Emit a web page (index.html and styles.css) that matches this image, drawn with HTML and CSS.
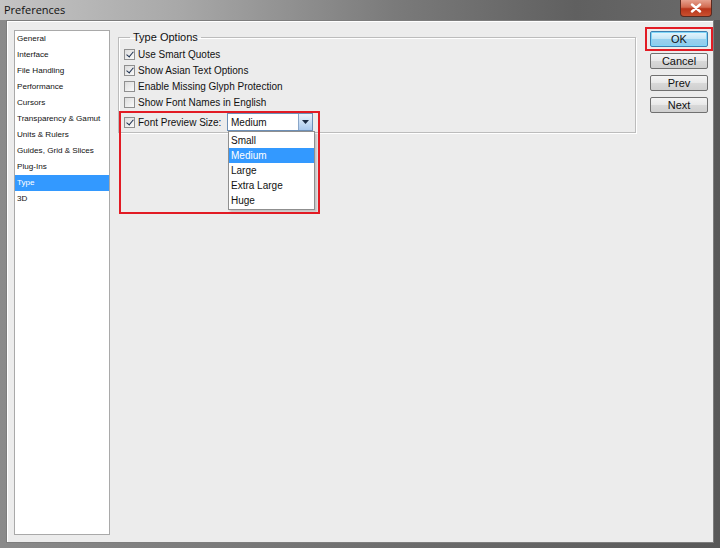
FILE: index.html
```html
<!DOCTYPE html>
<html>
<head>
<meta charset="utf-8">
<link rel="stylesheet" href="styles.css">
</head>
<body>
<div class="window">
  <div class="titlebar">
    <span class="title">Preferences</span>
    <div class="close">
      <svg width="12" height="10" viewBox="0 0 12 10"><path d="M2 1.5 L10 8.5 M10 1.5 L2 8.5" stroke="#fff" stroke-width="2.4" stroke-linecap="round"/></svg>
    </div>
  </div>
  <div class="content">
    <ul class="nav">
      <li>General</li>
      <li>Interface</li>
      <li>File Handling</li>
      <li>Performance</li>
      <li>Cursors</li>
      <li>Transparency &amp; Gamut</li>
      <li>Units &amp; Rulers</li>
      <li>Guides, Grid &amp; Slices</li>
      <li>Plug-Ins</li>
      <li class="sel">Type</li>
      <li>3D</li>
    </ul>
    <div class="main">
      <fieldset class="group">
        <legend>Type Options</legend>
        <label class="row"><span class="cb on"></span>Use Smart Quotes</label>
        <label class="row"><span class="cb on"></span>Show Asian Text Options</label>
        <label class="row"><span class="cb"></span>Enable Missing Glyph Protection</label>
        <label class="row"><span class="cb"></span>Show Font Names in English</label>
        <div class="row last">
          <span class="cb on"></span><span class="lbl">Font Preview Size:</span>
          <div class="select">
            <span class="val">Medium</span>
            <span class="arrow"><svg width="7" height="4" viewBox="0 0 7 4"><path d="M0 0 H7 L3.5 4 Z" fill="#1a2a44"/></svg></span>
            <ul class="options">
              <li>Small</li>
              <li class="sel">Medium</li>
              <li>Large</li>
              <li>Extra Large</li>
              <li>Huge</li>
            </ul>
          </div>
          <div class="mark mark-size"></div>
        </div>
      </fieldset>
    </div>
    <div class="buttons">
      <div class="btnwrap">
        <button class="btn ok">OK</button>
        <div class="mark mark-ok"></div>
      </div>
      <button class="btn">Cancel</button>
      <button class="btn">Prev</button>
      <button class="btn">Next</button>
    </div>
  </div>
</div>
</body>
</html>
```
FILE: styles.css
```css
html, body {
  margin: 0;
  padding: 0;
  width: 720px;
  height: 548px;
  overflow: hidden;
  font-family: "Liberation Sans", Arial, sans-serif;
}
.window {
  width: 720px;
  height: 548px;
  box-sizing: border-box;
  background: linear-gradient(to right, #8a8a8a 0%, #7a7a7a 30%, #6a6a6a 60%, #585858 100%);
  display: flex;
  flex-direction: column;
}
.titlebar {
  height: 20px;
  flex: none;
  display: flex;
  align-items: center;
  justify-content: space-between;
  background: linear-gradient(to right, #c4c4c4 0%, #a8a8a8 25%, #7a7a7a 55%, #606060 80%, #6a6a6a 100%);
}
.title {
  font-family: "Open Sans", "Liberation Sans", sans-serif;
  font-size: 11px;
  color: #111;
  padding-left: 4px;
  padding-bottom: 1px;
}
.close {
  width: 32px;
  height: 17px;
  margin-right: 8px;
  align-self: flex-start;
  box-sizing: border-box;
  border: 1px solid #5a2a20;
  border-top: none;
  border-radius: 0 0 4px 4px;
  background: linear-gradient(to bottom, #e6a08e 0%, #d26a50 45%, #b8341a 55%, #c9502f 100%);
  display: flex;
  align-items: center;
  justify-content: center;
}
.content {
  flex: 1;
  margin: 0 6px 5px 6px;
  background: #ececec;
  border: 1px solid #7d7d7d;
  box-shadow: inset 1px 1px 0 #fff;
  display: flex;
  padding: 9px 5px 0 7px;
  box-sizing: border-box;
}
.nav {
  list-style: none;
  margin: 0;
  padding: 0;
  width: 96px;
  height: 505px;
  box-sizing: border-box;
  background: #fff;
  border: 1px solid #a9a9a9;
  font-size: 8.1px;
  color: #111;
  flex: none;
}
.nav li {
  height: 16px;
  line-height: 16px;
  padding-left: 2px;
  white-space: nowrap;
}
.nav li.sel {
  background: #3399ff;
  color: #fff;
}
.main {
  width: 518px;
  margin-left: 8px;
  flex: none;
}
.group {
  margin: 0;
  padding: 2px 0 8px 5px;
  border: 1px solid #bcbcbc;
  box-shadow: 1px 1px 0 #fff, inset 1px 1px 0 #fff;
  height: 103px;
  box-sizing: border-box;
  font-size: 10px;
  color: #111;
}
.group legend {
  margin-left: 6px;
  padding: 0 3px;
  font-size: 11px;
  line-height: 14px;
}
.row {
  display: flex;
  align-items: center;
  height: 16px;
  gap: 3px;
  position: relative;
  white-space: nowrap;
}
.row.last {
  height: 20px;
  margin-top: 2px;
}
.cb {
  width: 11px;
  height: 11px;
  box-sizing: border-box;
  border: 1px solid #8f8f8f;
  background: linear-gradient(to bottom right, #dcdcdc, #fafafa);
  flex: none;
  position: relative;
}
.cb.on::after {
  content: "";
  position: absolute;
  left: 3px;
  top: 0px;
  width: 3px;
  height: 6px;
  border: solid #1c2f4f;
  border-width: 0 1.5px 1.5px 0;
  transform: rotate(40deg);
}
.lbl {
  width: 86px;
  flex: none;
}
.select {
  position: relative;
  width: 86px;
  height: 18px;
  box-sizing: border-box;
  border: 1px solid #6d8fb6;
  background: #fff;
  display: flex;
  align-items: center;
  flex: none;
}
.val {
  flex: 1;
  padding-left: 3px;
}
.arrow {
  width: 14px;
  height: 16px;
  box-sizing: border-box;
  border-left: 1px solid #8aa6c8;
  background: linear-gradient(to bottom, #eaf3fd 0%, #c9def5 50%, #a9c8ee 100%);
  display: flex;
  align-items: center;
  justify-content: center;
}
.options {
  position: absolute;
  left: 0;
  top: 17px;
  width: 87px;
  margin: 0;
  padding: 1px 0;
  list-style: none;
  background: #fff;
  border: 1px solid #8f8f8f;
  box-sizing: border-box;
  box-shadow: 2px 2px 2px rgba(0,0,0,0.18);
  z-index: 2;
}
.options li {
  height: 15px;
  line-height: 15px;
  padding-left: 2px;
}
.options li.sel {
  background: #3399ff;
  color: #fff;
}
.mark {
  position: absolute;
  border: 2px solid #e21b24;
  box-sizing: border-box;
  pointer-events: none;
  z-index: 3;
}
.mark-size {
  left: -5px;
  top: -1px;
  width: 201px;
  height: 103px;
}
.buttons {
  margin-left: 14px;
  padding-top: 1px;
  display: flex;
  flex-direction: column;
  gap: 6px;
  width: 58px;
  flex: none;
}
.btnwrap {
  position: relative;
  height: 16px;
}
.btn {
  display: block;
  width: 58px;
  height: 16px;
  padding: 0;
  margin: 0;
  box-sizing: border-box;
  border: 1px solid #707070;
  border-radius: 2px;
  background: linear-gradient(to bottom, #f4f4f4 0%, #e8e8e8 50%, #d8d8d8 52%, #cfcfcf 100%);
  font-family: "Liberation Sans", Arial, sans-serif;
  font-size: 11px;
  color: #111;
  line-height: 14px;
}
.btn.ok {
  border-color: #3c7fb1;
  background: linear-gradient(to bottom, #e8f6fd 0%, #c4e5f6 50%, #98d1ef 52%, #8fcbec 100%);
  box-shadow: inset 0 0 0 1px #7fd6f8;
}
.mark-ok {
  left: -5px;
  top: -4px;
  width: 68px;
  height: 24px;
}
```
